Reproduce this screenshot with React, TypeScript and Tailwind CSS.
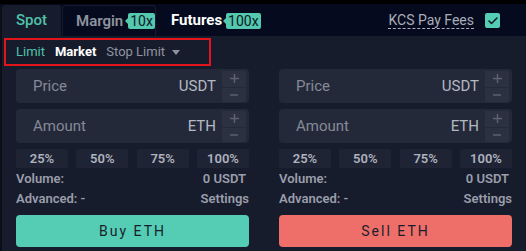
import { Check } from 'lucide-react';

function Stepper() {
  return (
    <div className="flex flex-col gap-px ml-[6px]">
      <div className="w-[24px] h-[16px] rounded-tr-[3px] bg-[#2c3142] flex items-center justify-center">
        <svg width="9" height="9" viewBox="0 0 9 9">
          <path d="M4.5 0v9M0 4.5h9" stroke="#5b6172" strokeWidth="1.5" />
        </svg>
      </div>
      <div className="w-[24px] h-[14px] rounded-br-[3px] bg-[#2c3142] flex items-center justify-center">
        <svg width="8" height="2" viewBox="0 0 8 2">
          <path d="M0 1h8" stroke="#5b6172" strokeWidth="1.5" />
        </svg>
      </div>
    </div>
  );
}

function Field({ label, unit }: { label: string; unit: string }) {
  return (
    <div className="h-[34px] rounded-[4px] bg-[#242939] flex items-center pl-[17px] pr-[3px]">
      <span className="text-[15px] text-[#858a98] flex-1">{label}</span>
      <span className="text-[15px] text-[#b4b8c3]">{unit}</span>
      <Stepper />
    </div>
  );
}

function OrderPanel({ side }: { side: 'buy' | 'sell' }) {
  const isBuy = side === 'buy';
  return (
    <div className="w-[233px] flex flex-col">
      <Field label="Price" unit="USDT" />
      <div className="h-[6px]" />
      <Field label="Amount" unit="ETH" />
      <div className="flex justify-between mt-[6px]">
        {['25%', '50%', '75%', '100%'].map((p) => (
          <div key={p} className="w-[52px] h-[19px] bg-[#1f2435] rounded-[2px] text-[13px] leading-[19px] font-semibold text-[#aeb2bd] text-center">
            {p}
          </div>
        ))}
      </div>
      <div className="flex justify-between text-[13px] font-semibold text-[#9a9eaa] mt-[1px] leading-[20px] pr-[3px]">
        <span>Volume:</span>
        <span>0 USDT</span>
      </div>
      <div className="flex justify-between text-[13px] font-semibold text-[#9a9eaa] leading-[20px]">
        <span>Advanced: -</span>
        <span>Settings</span>
      </div>
      <button
        className={`mt-[6px] h-[32px] rounded-[4px] text-[14px] tracking-[2px] text-[#1a1e2a] ${
          isBuy ? 'bg-[#55cdb5]' : 'bg-[#ee6f6a]'
        }`}
      >
        {isBuy ? 'Buy ETH' : 'Sell ETH'}
      </button>
    </div>
  );
}

function Badge({ text }: { text: string }) {
  return (
    <span className="relative h-[16px] px-[2px] rounded-[2px] bg-[#55c8b0] text-[14px] leading-[16px] text-[#0c1a1e]">
      <span className="absolute -left-[3px] top-[5px] w-0 h-0 border-y-[3px] border-y-transparent border-r-[3px] border-r-[#55c8b0]" />
      {text}
    </span>
  );
}

export default function App() {
  return (
    <div
      className="relative w-[526px] h-[251px] bg-black pt-[4px] overflow-hidden"
      style={{ fontFamily: 'Roboto, "Noto Sans", sans-serif' }}
    >
      <div className="h-full border-l-2 border-[#0b0d17] bg-[#171c2d] flex flex-col">
        {/* product tabs */}
        <div className="h-[32px] bg-[#050a1e] flex items-end">
          <div className="w-[59px] h-[31px] bg-[#171c2d] rounded-t-[3px] flex items-center justify-center text-[15px] font-medium text-[#4fc2a8]">
            Spot
          </div>
          <div className="w-[94px] h-[31px] ml-px border border-b-0 border-[#161b2c] rounded-t-[4px] flex items-center pl-[13px] gap-[5px]">
            <span className="text-[15px] font-semibold text-[#8f939f]">Margin</span>
            <Badge text="10x" />
          </div>
          <div className="flex items-center h-[31px] ml-[15px] gap-[4px]">
            <span className="text-[15px] font-bold text-white">Futures</span>
            <Badge text="100x" />
          </div>
          <div className="flex-1" />
          <div className="flex items-center h-[31px] mr-[26px]">
            <span className="text-[14px] text-[#a9adb8] border-b border-dashed border-[#a9adb8] leading-[16px]">KCS Pay Fees</span>
            <div className="ml-[11px] w-[15px] h-[15px] rounded-[2px] bg-[#55cdb5] flex items-center justify-center">
              <Check className="w-[12px] h-[12px] text-[#121624]" strokeWidth={3} />
            </div>
          </div>
        </div>

        {/* order types */}
        <div className="h-[32px] flex items-center pl-[14px] gap-[10px] text-[13px]">
          <span className="text-[#4fc2a8]">Limit</span>
          <span className="font-bold text-white">Market</span>
          <span className="flex items-center gap-[7px] text-[#8f939f]">
            Stop Limit
            <svg width="8" height="5" viewBox="0 0 8 5">
              <path d="M0 0h8L4 5z" fill="#8f939f" />
            </svg>
          </span>
        </div>

        <div className="flex justify-between px-[14px] mt-[1px]">
          <OrderPanel side="buy" />
          <OrderPanel side="sell" />
        </div>
      </div>

      {/* annotation box */}
      <div className="absolute left-[4px] top-[38px] w-[207px] h-[28px] border-2 border-[#e3151c]" />
    </div>
  );
}
